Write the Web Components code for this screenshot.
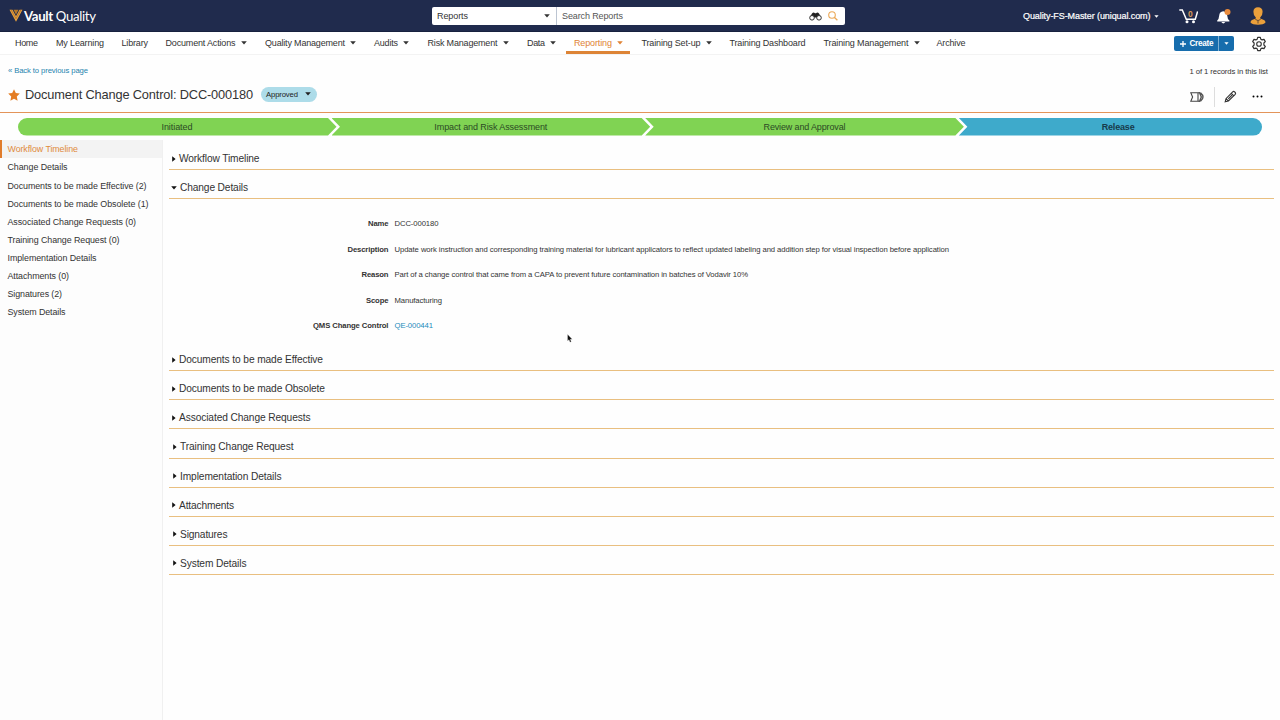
<!DOCTYPE html>
<html lang="en">
<head>
<meta charset="utf-8">
<title>Document Change Control: DCC-000180</title>
<style>
html,body{margin:0;height:100%;background:#fefefe}
body{font-family:"Liberation Sans",Arial,sans-serif;color:#333;overflow:hidden}
</style>
</head>
<body>
<vault-app></vault-app>
<script>
const define = (name, css, html, connected) => {
  const t = document.createElement('template');
  t.innerHTML = `<style>*{box-sizing:border-box}${css}</style>${html}`;
  customElements.define(name, class extends HTMLElement {
    constructor(){ super(); this.attachShadow({mode:'open'}).append(t.content.cloneNode(true)); }
    connectedCallback(){ if (connected) connected(this, this.shadowRoot); }
  });
};

/* A one-line label that tracks its letters to span the width given in `w`. */
define('fit-label', ':host{display:block;white-space:nowrap;flex:none}span{display:inline-block}', '<span><slot></slot></span>', (el, root) => {
  const w = +el.getAttribute('w'), s = root.querySelector('span');
  const fit = () => {
    const n = el.textContent.length, now = s.getBoundingClientRect().width;
    if (w && now && n > 1) { s.style.letterSpacing = ((w - now) / (n - 1)) + 'px'; el.style.width = w + 'px'; }
  };
  fit();
});

define('caret-icon', ':host{display:block;flex:none;width:6px;height:4px}svg{display:block;width:100%;height:100%}:host([side]){width:4px;height:6px}:host([side]) svg{width:6px;height:4px;transform:translate(-1px,1px) rotate(-90deg)}',
  '<svg viewBox="0 0 6 4"><path d="M.2.2h5.6L3 3.6z" fill="currentColor"/></svg>');

define('vault-header', `
:host{display:grid;grid-template-columns:432px 413px 1fr;align-items:center;height:32px;background:#202b4d;color:#fff;border-bottom:1px solid #17213f}
.logo{display:flex;align-items:center;padding-left:9px;font-family:Lato,sans-serif;font-size:13.2px;line-height:16px}
.logo svg{width:14px;height:13px;margin-right:1px;flex:none}
.logo b{font-weight:700}
.search{display:flex;height:18px;background:#fff;border-radius:2px;color:#333;font-size:9px;align-items:center;margin-top:1px}
.pick{display:flex;align-items:center;width:125px;height:18px;padding:0 6px 0 5px;border-right:1px solid #bcc5d2;justify-content:space-between}
.query{padding-left:5px;flex:1;color:#555}
.user{display:flex;align-items:center;padding-left:178px;font-size:9px;-webkit-text-stroke:.2px #fff;margin-top:1px}
.user caret-icon{width:5px;height:3px;margin-left:3px}
.cart{margin-left:20px}.bell{margin-left:17px}.person{margin-left:18.500px}
svg{display:block;flex:none}`,
`<div class="logo"><svg viewBox="0 0 14 13"><path d="M.5.7h3L7 7.2 10.500.7h3L7 12.700z" fill="#e7a13e"/><path d="M4.500.7h5L7 5.400z" fill="#b77827"/><path d="M2 .7l5 9 5-9" fill="none" stroke="#a66a2a" stroke-width=".7"/></svg><fit-label w="72"><b>Vault</b> Quality</fit-label></div>
<div class="search"><div class="pick"><fit-label w="31">Reports</fit-label><caret-icon></caret-icon></div><div class="query"><fit-label w="61">Search Reports</fit-label></div>
<svg width="13" height="9" viewBox="0 0 13 9"><path d="M3 1.400Q4.500-.3 6 1.200h1Q8.500-.3 10 1.400L12 5 7.500 5.500H5.500L1 5z" fill="#222"/><circle cx="3" cy="5.800" r="2.300" fill="#fff" stroke="#333"/><circle cx="10" cy="5.800" r="2.300" fill="#fff" stroke="#333"/></svg>
<svg width="10" height="10" viewBox="0 0 10 10" style="margin:0 7px 0 6px"><circle cx="4" cy="4" r="3.300" fill="none" stroke="#eba957" stroke-width="1.100"/><path d="M6.500 6.500L9.400 9.300" stroke="#eba957" stroke-width="1.300"/></svg></div>
<div class="user"><fit-label w="127.5">Quality-FS-Master (uniqual.com)</fit-label><caret-icon></caret-icon>
<svg class="cart" width="19" height="16" viewBox="0 0 19 16" style="-webkit-text-stroke:0"><path d="M.3 2h3l4 9.200h9L18.600 3.500" fill="none" stroke="#fff" stroke-width="1.500"/><circle cx="8" cy="13.700" r="1.500" fill="#fff"/><circle cx="14.500" cy="13.700" r="1.500" fill="#fff"/><text x="11.300" y="8.800" text-anchor="middle" font-family="Liberation Sans" font-size="8.500" font-weight="bold" fill="#d99a58" stroke="none">0</text></svg>
<svg class="bell" width="17" height="17" viewBox="0 0 17 17"><path d="M2.200 12.500Q4 11 4.200 7.500 4.500 3.500 8.200 3.200 12 3.500 12.200 7.500 12.400 11 14.400 12.500V13.500H2.200zM6.300 14h4Q8.300 16.800 6.300 14z" fill="#fff"/><circle cx="12.500" cy="4" r="3" fill="#e98b3c"/></svg>
<svg class="person" width="16" height="18" viewBox="0 0 16 18"><path d="M3.400 4.800Q3.500.4 8 .3q4.500.1 4.600 4.500 0 4-2.400 5.800v1L14 13q1.500.8 1.500 2.500Q13.500 17.700 8 17.700T.5 15.500Q.5 13.800 2 13l3.800-1.400v-1Q3.400 8.800 3.400 4.800z" fill="#eba03b"/><path d="M5.300 12.300L8 13.600l2.700-1.300M8 13.500v3" fill="none" stroke="#6d5037" stroke-width="1"/></svg></div>`);

define('nav-item', `
:host{display:flex;align-items:center;gap:5px;height:22px;padding:3px 0 0 8px;width:max-content;border-bottom:3px solid transparent}
:host([active]){color:#e08335;border-color:#dd8436;padding-right:8px}
caret-icon{display:none}:host([menu]) caret-icon{display:block}`, '<slot></slot><caret-icon></caret-icon>');

define('vault-nav', `
:host{display:flex;height:23px;border-bottom:1px solid #f3f3f3;font-size:9px;background:#fff;padding-left:7px;justify-content:space-between;color:#333}
.items{display:grid;grid-template-columns:41px 65.500px 44px 99.500px 109px 53.500px 99.500px 39.500px 75px 88px 94px 113px 50px}
.right{display:flex;align-items:center;padding-right:13px;height:23px}
.create{display:flex;align-items:center;height:15px;width:60px;background:#176dad;border-radius:2px;color:#fff;font-size:8.200px;font-weight:bold}
.create svg{margin:0 3px 0 5px}.create i{width:1px;height:15px;background:#7db0d4;margin:0 5px 0 4px}.create caret-icon{width:5px;height:3px}
.gear{margin-left:17.500px}`,
`<div class="items"><nav-item><fit-label w="23">Home</fit-label></nav-item><nav-item><fit-label w="48">My Learning</fit-label></nav-item><nav-item><fit-label w="26.5">Library</fit-label></nav-item><nav-item menu><fit-label w="70">Document Actions</fit-label></nav-item><nav-item menu><fit-label w="80">Quality Management</fit-label></nav-item><nav-item menu><fit-label w="24">Audits</fit-label></nav-item><nav-item menu><fit-label w="70">Risk Management</fit-label></nav-item><nav-item menu><fit-label w="18">Data</fit-label></nav-item><nav-item menu active style="margin-left:7.500px;width:64px"><fit-label w="38">Reporting</fit-label></nav-item><nav-item menu><fit-label w="59">Training Set-up</fit-label></nav-item><nav-item><fit-label w="76">Training Dashboard</fit-label></nav-item><nav-item menu><fit-label w="85">Training Management</fit-label></nav-item><nav-item><fit-label w="29">Archive</fit-label></nav-item></div>
<div class="right"><div class="create"><svg width="8" height="8" viewBox="0 0 8 8"><path d="M4 1v6M1 4h6" stroke="#fff" stroke-width="1.300"/></svg><fit-label w="24">Create</fit-label><i></i><caret-icon></caret-icon></div>
<svg class="gear" width="16" height="16" viewBox="0 0 16 16"><path d="M6.700 1.300h2.600l.5 1.900 1.300.7 1.900-.5 1.300 2.200-1.400 1.400v2l1.400 1.400-1.300 2.200-1.900-.5-1.300.7-.5 1.900H6.700l-.5-1.900-1.300-.7-1.900.5-1.300-2.200L3.100 9V7L1.700 5.600 3 3.400l1.900.5 1.300-.7z" fill="none" stroke="#333" stroke-width="1.200" stroke-linejoin="round"/><circle cx="8" cy="8" r="2.300" fill="none" stroke="#333" stroke-width="1.100"/></svg></div>`);

define('record-header', `
:host{display:block;height:58px;border-bottom:1.500px solid #e39459;padding:0 12px 0 8px}
.row{display:flex;justify-content:space-between}
.back{color:#1e84ae;font-size:7.700px;line-height:12px;padding-top:9.500px}
.count{font-size:7.700px;line-height:12px;padding-top:10.500px;color:#333}
.title{display:flex;align-items:center;height:18px;font-size:12.800px;margin-top:8px}
.title>fit-label{margin:0 8px 0 5px;line-height:16px}
.status{display:flex;align-items:center;height:15px;width:56px;border-radius:8px;background:#addce9;font-size:7.700px;padding-left:5px;gap:7px;margin-top:-1px;color:#222}
.tools{display:flex;align-items:center;margin-top:9px;height:20px}
.tools i{width:1px;height:20px;background:#ddd;margin:0 9.500px 0 9.500px}
.tools svg{display:block}`,
`<div class="row"><fit-label class="back" w="80">« Back to previous page</fit-label><fit-label class="count" w="78.500">1 of 1 records in this list</fit-label></div>
<div class="row"><div class="title"><svg width="12" height="12" viewBox="0 0 12 12"><path d="M6 .3l1.800 3.800 4 .5-3 2.900.8 4.200L6 9.700l-3.600 2 .8-4.200-3-2.900 4-.5z" fill="#e47d23"/></svg><fit-label w="228">Document Change Control: DCC-000180</fit-label><div class="status"><fit-label w="32">Approved</fit-label><caret-icon></caret-icon></div></div>
<div class="tools"><svg width="14" height="10" viewBox="0 0 14 10"><path d="M.8.800H8v8.400H.8L2.600 5z" fill="none" stroke="#444" stroke-width="1.100"/><path d="M8.200.800h1.400L11.300 5 9.600 9.200H8.200M10.500.800q5 4.200 0 8.400" fill="none" stroke="#555" stroke-width="1.400"/></svg><i></i>
<svg width="13" height="13" viewBox="0 0 13 13"><path d="M1.200 11.800L2 8.700 8.700 1.900q1-.9 1.900 0l.6.6q.8.9 0 1.800L4.400 11z M7.300 3.300l2.500 2.500M2.200 8.800l2.200 2.100M8 5.200L4.300 8.900" fill="none" stroke="#333" stroke-width="1.150"/></svg>
<svg width="11" height="3" viewBox="0 0 11 3" style="margin:0 5.500px 0 14.500px"><circle cx="1.500" cy="1.500" r="1"/><circle cx="5.500" cy="1.500" r="1"/><circle cx="9.500" cy="1.500" r="1"/></svg></div></div>`);

define('life-stage', `
:host{display:flex;align-items:center;justify-content:center;height:17.500px;background:#80d353;font-size:9px;color:#2c4a25;clip-path:polygon(0 0,calc(100% - 8.500px) 0,100% 50%,calc(100% - 8.500px) 100%,0 100%,8.500px 50%)}
:host([first]){clip-path:polygon(0 0,calc(100% - 8.500px) 0,100% 50%,calc(100% - 8.500px) 100%,0 100%);border-radius:9px 0 0 9px}
:host([current]){clip-path:polygon(0 0,100% 0,100% 100%,0 100%,8.500px 50%);border-radius:0 9px 9px 0;background:#3eaacb;color:#173a4a;font-weight:bold;padding-left:15px}`,
'<slot></slot>');

define('life-cycle', `
:host{display:grid;grid-template-columns:319px 313.700px 313.700px 298.600px;height:28px;padding:5px 0 0 17.500px}
life-stage + life-stage{margin-left:-5px}`,
`<life-stage first><fit-label w="31">Initiated</fit-label></life-stage><life-stage><fit-label w="113">Impact and Risk Assessment</fit-label></life-stage><life-stage><fit-label w="82">Review and Approval</fit-label></life-stage><life-stage current><fit-label w="33">Release</fit-label></life-stage>`);

define('side-link', `
:host{display:flex;align-items:center;height:18px;padding-left:7.500px;color:#333;border-left:0 solid #e07c2b}
:host([active]){color:#e08a3c;background:#f3f3f3;border-left-width:2px;padding-left:5.500px}`, '<slot></slot>');

define('record-sidebar', `
:host{display:flex;flex-direction:column;gap:.060px;border-right:1px solid #f0f0f0;font-size:8.900px;background:#fdfdfd;margin-top:-.600px}`,
`<side-link active><fit-label w="70.500">Workflow Timeline</fit-label></side-link><side-link><fit-label w="60">Change Details</fit-label></side-link><side-link><fit-label w="139">Documents to be made Effective (2)</fit-label></side-link><side-link><fit-label w="141">Documents to be made Obsolete (1)</fit-label></side-link><side-link><fit-label w="128.500">Associated Change Requests (0)</fit-label></side-link><side-link><fit-label w="112">Training Change Request (0)</fit-label></side-link><side-link><fit-label w="89">Implementation Details</fit-label></side-link><side-link><fit-label w="61.500">Attachments (0)</fit-label></side-link><side-link><fit-label w="54.500">Signatures (2)</fit-label></side-link><side-link><fit-label w="58">System Details</fit-label></side-link>`);

define('record-section', `
:host{display:block}
header{display:flex;align-items:center;height:29.130px;padding:7px 0 0 2.500px;border-bottom:1.500px solid #e9bf80;font-size:10.200px;color:#333;gap:3.500px}
:host([in]) header{padding-left:3.500px}
caret-icon{color:#111}
:host([open]) header{padding-left:2px;gap:3px}`, '<header><caret-icon side></caret-icon><slot name="title"></slot></header><slot></slot>', (el, root) => {
  if (el.hasAttribute('open')) root.querySelector('caret-icon').removeAttribute('side');
});

define('field-row', `
:host{display:grid;grid-template-columns:219.500px 1fr;column-gap:6px;height:25.550px;align-items:center;font-size:7.700px;color:#333}
.name{font-weight:bold;justify-self:end;color:#333}`, '<div class="name"><slot name="label"></slot></div><slot></slot>');

define('record-body', `
:host{display:block;padding:0 6px 0 6px}
.fields{height:142.800px;padding-top:11.700px}
a{color:#238bbc}`,
`<record-section><fit-label slot="title" w="80.500">Workflow Timeline</fit-label></record-section>
<record-section open><fit-label slot="title" w="68">Change Details</fit-label><div class="fields">
<field-row><fit-label slot="label" w="20.500">Name</fit-label><fit-label w="44">DCC-000180</fit-label></field-row>
<field-row><fit-label slot="label" w="41">Description</fit-label><fit-label w="554.500">Update work instruction and corresponding training material for lubricant applicators to reflect updated labeling and addition step for visual inspection before application</fit-label></field-row>
<field-row><fit-label slot="label" w="27">Reason</fit-label><fit-label w="353.500">Part of a change control that came from a CAPA to prevent future contamination in batches of Vodavir 10%</fit-label></field-row>
<field-row><fit-label slot="label" w="22.500">Scope</fit-label><fit-label w="47.500">Manufacturing</fit-label></field-row>
<field-row><fit-label slot="label" w="75.500">QMS Change Control</fit-label><a><fit-label w="38.500">QE-000441</fit-label></a></field-row></div></record-section>
<record-section><fit-label slot="title" w="144">Documents to be made Effective</fit-label></record-section>
<record-section><fit-label slot="title" w="146">Documents to be made Obsolete</fit-label></record-section>
<record-section><fit-label slot="title" w="131.500">Associated Change Requests</fit-label></record-section>
<record-section in><fit-label slot="title" w="113.500">Training Change Request</fit-label></record-section>
<record-section in><fit-label slot="title" w="101.500">Implementation Details</fit-label></record-section>
<record-section><fit-label slot="title" w="55">Attachments</fit-label></record-section>
<record-section in><fit-label slot="title" w="47.500">Signatures</fit-label></record-section>
<record-section in><fit-label slot="title" w="66.500">System Details</fit-label></record-section>`);

define('vault-app', `
:host{display:grid;grid-template-rows:32px 23px 58px 28px 1fr;width:1280px;height:720px;background:#fefefe}
main{display:grid;grid-template-columns:163px 1fr;min-height:0}
.pointer{position:absolute;left:566.500px;top:333.500px}`,
`<vault-header></vault-header><vault-nav></vault-nav><record-header></record-header><life-cycle></life-cycle><main><record-sidebar></record-sidebar><record-body></record-body></main>
<svg class="pointer" width="6" height="9" viewBox="0 0 6 9"><path d="M.5.300v6.700l1.500-1.300 1 2.600 1.300-.5-1-2.500h2z" fill="#111" stroke="#fff" stroke-width=".3"/></svg>`);
</script>
</body>
</html>
